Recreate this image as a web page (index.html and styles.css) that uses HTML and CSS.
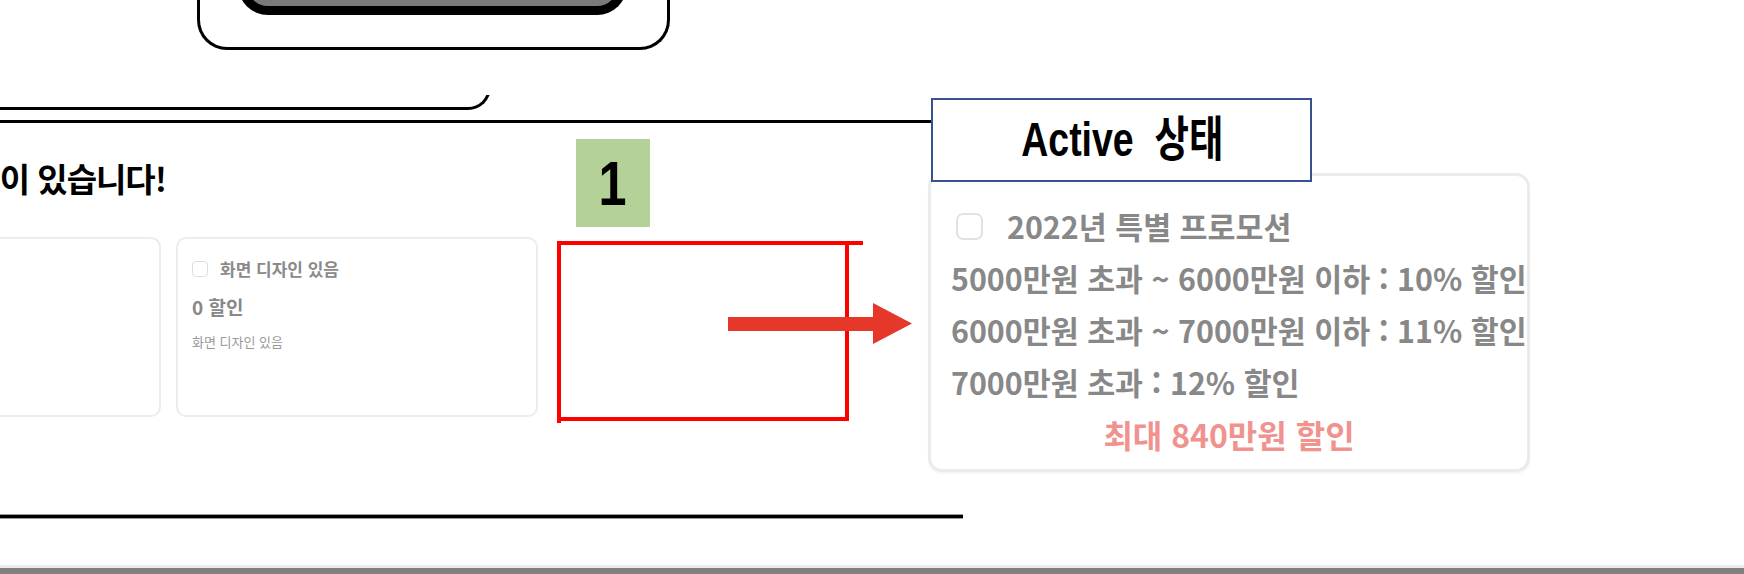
FILE: index.html
```html
<!DOCTYPE html>
<html lang="ko">
<head>
<meta charset="utf-8">
<title>Active 상태</title>
<link rel="stylesheet" href="styles.css">
</head>
<body>
<div class="stage">
  <div class="shot">
    <div class="top-frame">
      <div class="device"></div>
    </div>
    <div class="curve-wrap"><div class="curve-box"></div></div>
    <div class="rule-top"></div>
    <div class="heading"><h2>이 있습니다!</h2></div>
    <div class="cards">
      <div class="card card-left"></div>
      <div class="card card-option">
        <div class="opt-row">
          <span class="check"></span>
          <span class="opt-title">화면 디자인 있음</span>
        </div>
        <div class="opt-price">0 할인</div>
        <div class="opt-desc">화면 디자인 있음</div>
      </div>
    </div>
    <div class="rule-bottom"></div>
    <div class="footer-bar"></div>
  </div>

  <div class="badge"><span>1</span></div>

  <svg class="marker" width="380" height="200" viewBox="550 235 380 200" aria-hidden="true">
    <line x1="557" y1="243" x2="863" y2="243" stroke="#ff0000" stroke-width="4"/>
    <line x1="559" y1="241" x2="559" y2="423" stroke="#ff0000" stroke-width="4"/>
    <line x1="847" y1="243" x2="847" y2="420" stroke="#ff0000" stroke-width="4"/>
    <line x1="557" y1="419" x2="849" y2="419" stroke="#ff0000" stroke-width="4"/>
    <rect x="728" y="317" width="146" height="14" fill="#e5372a"/>
    <polygon points="873,303 912,323.5 873,344" fill="#e5372a"/>
  </svg>

  <div class="state-label"><span>Active&nbsp;&nbsp;상태</span></div>

  <div class="promo">
    <div class="promo-head">
      <span class="check big"></span>
      <span>2022년 특별 프로모션</span>
    </div>
    <div class="promo-line">5000만원 초과 ~ 6000만원 이하 : 10% 할인</div>
    <div class="promo-line">6000만원 초과 ~ 7000만원 이하 : 11% 할인</div>
    <div class="promo-line">7000만원 초과 : 12% 할인</div>
    <div class="promo-max">최대 840만원 할인</div>
  </div>
</div>
</body>
</html>
```
FILE: styles.css
```css
* { box-sizing: border-box; }
html, body {
  margin: 0;
  padding: 0;
  background: #fff;
}
body {
  width: 1744px;
  height: 574px;
  overflow: hidden;
  font-family: "Noto Sans CJK KR", "Noto Sans", sans-serif;
}
.stage {
  position: relative;
  width: 1744px;
  height: 574px;
}
.shot {
  display: flex;
  flex-direction: column;
}

/* top screenshot frame */
.top-frame {
  margin-left: 197px;
  width: 473px;
  height: 50px;
  border: 3px solid #000;
  border-top: 0;
  border-radius: 0 0 30px 30px;
  overflow: hidden;
}
.device {
  margin-left: 38px;
  margin-top: -30px;
  width: 389px;
  height: 45px;
  background: #7a7a7a;
  border: 9px solid #000;
  border-top: 0;
  border-radius: 0 0 30px 30px;
}

.curve-wrap {
  margin-top: 45px;
  width: 491px;
  height: 15px;
  overflow: hidden;
  display: flex;
  flex-direction: column;
  justify-content: flex-end;
}
.curve-box {
  flex-shrink: 0;
  height: 40px;
  border-right: 3px solid #000;
  border-bottom: 3px solid #000;
  border-bottom-right-radius: 23px;
}

.rule-top {
  margin-top: 10px;
  width: 940px;
  height: 3px;
  background: #000;
}

.heading {
  margin-top: 35px;
  width: 166px;
  height: 40px;
  overflow: hidden;
  display: flex;
  justify-content: flex-end;
}
.heading h2 {
  margin: 0;
  flex-shrink: 0;
  white-space: nowrap;
  font-size: 33px;
  line-height: 40px;
  font-weight: 700;
  color: #000;
  letter-spacing: -1px;
}

.cards {
  margin-top: 39px;
  width: 538px;
  height: 180px;
  display: flex;
  justify-content: flex-end;
  gap: 15px;
}
.card {
  flex-shrink: 0;
  height: 180px;
  border: 2px solid #ececec;
  border-radius: 10px;
  background: #fff;
}
.card-left { width: 200px; }
.card-option {
  width: 362px;
  padding: 18px 14px 0;
}
.opt-row {
  display: flex;
  align-items: center;
  gap: 12px;
  height: 24px;
}
.check {
  width: 16px;
  height: 16px;
  border: 1.5px solid #dedede;
  border-radius: 4px;
  flex-shrink: 0;
}
.opt-title {
  font-size: 17px;
  font-weight: 700;
  color: #8a8a8a;
  line-height: 24px;
}
.opt-price {
  margin-top: 12px;
  font-size: 19px;
  font-weight: 700;
  color: #888;
  line-height: 28px;
}
.opt-desc {
  margin-top: 11px;
  font-size: 13px;
  color: #999;
  line-height: 20px;
}

.rule-bottom {
  margin-top: 97px;
  width: 963px;
  height: 5px;
  background: #000;
  border-top: 1px solid #9a9a9a;
  border-bottom: 1px solid #9a9a9a;
}
.footer-bar {
  margin-top: 46px;
  height: 9px;
  background: #808080;
  border-top: 3px solid #ebebeb;
}

/* annotations on the canvas */
.badge {
  position: absolute;
  left: 576px;
  top: 139px;
  width: 74px;
  height: 88px;
  background: #b4d198;
  display: flex;
  align-items: center;
  justify-content: center;
}
.badge span {
  display: inline-block;
  font-family: "Liberation Sans", Arial, sans-serif;
  font-size: 63px;
  font-weight: 700;
  color: #000;
  line-height: 1;
  transform: scaleX(0.8);
}
.marker {
  position: absolute;
  left: 550px;
  top: 235px;
}
.state-label {
  position: absolute;
  left: 931px;
  top: 98px;
  width: 381px;
  height: 84px;
  border: 2px solid #3a5190;
  background: #fff;
  z-index: 2;
  display: flex;
  align-items: center;
  justify-content: center;
}
.state-label span {
  display: inline-block;
  font-family: "Liberation Sans", "Noto Sans CJK KR", sans-serif;
  font-size: 48px;
  font-weight: 700;
  color: #000;
  transform: scaleX(0.78);
  white-space: nowrap;
  line-height: 1;
  padding-left: 2px;
}
.promo {
  position: absolute;
  left: 928px;
  top: 173px;
  width: 602px;
  height: 299px;
  border: 3px solid #ebebeb;
  border-radius: 14px;
  background: #fff;
  box-shadow: 0 2px 2px rgba(0, 0, 0, 0.04);
  padding: 24px 0 0 20px;
  color: #888;
  font-weight: 700;
  font-size: 30.4px;
  line-height: 52px;
  z-index: 1;
}
.promo-head {
  display: flex;
  align-items: center;
  gap: 24px;
  padding-left: 5px;
}
.check.big {
  width: 27px;
  height: 27px;
  border: 2px solid #e2e2e2;
  border-radius: 7px;
}
.promo-line {
  white-space: nowrap;
}
.promo-max {
  margin-left: -20px;
  text-align: center;
  font-size: 32px;
  color: #f0928e;
}
```
